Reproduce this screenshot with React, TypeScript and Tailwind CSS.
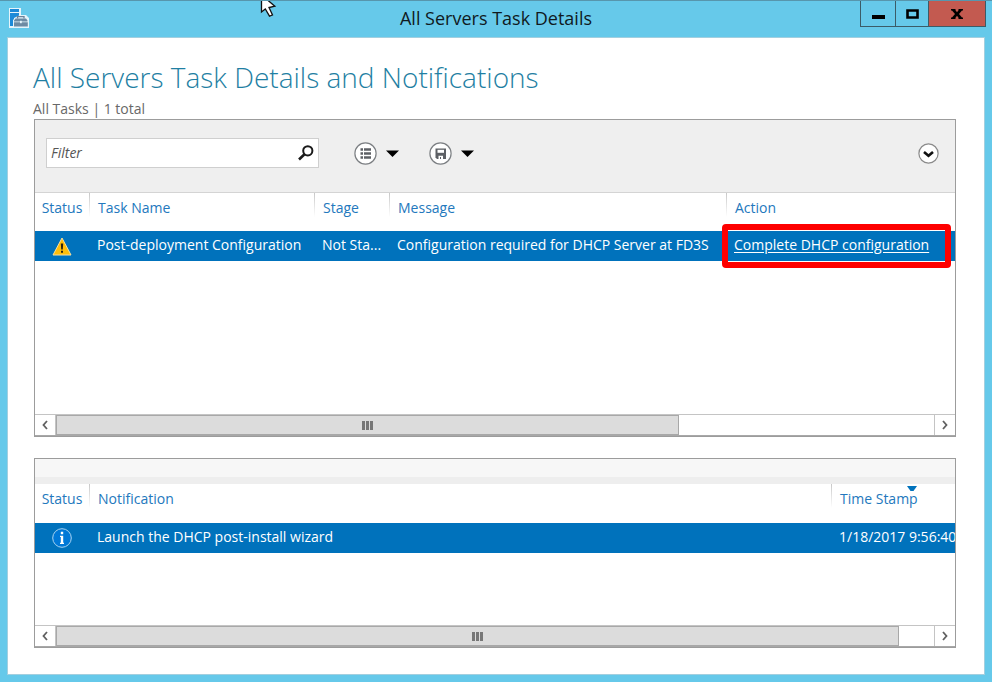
import type { ReactNode } from "react";

function ServerManagerIcon() {
  return (
    <svg width="20" height="20" viewBox="0 0 20 20" aria-hidden="true">
      <path d="M0 0h12v7h5l3 3v10H0z" fill="#e4f4fb" />
      <rect x="1" y="1" width="9" height="3" fill="#1c8ad8" />
      <path d="M1 5h9v2.500L5 10v1.500H4V18H1z" fill="#1c8ad8" />
      <path d="M8.500 10.500V8.600h6.500v1.900" fill="none" stroke="#6c8299" strokeWidth="1.300" />
      <path d="M6.500 10.500h10.500l1.500 2v1H11v-.8h1.500v.8H5v-1zM5 14.300h13.800V18.500H5z" fill="#6c8aa3" />
      <rect x="11" y="12.800" width="1.800" height="2.400" fill="#e4f4fb" />
    </svg>
  );
}

function Pointer() {
  return (
    <svg className="absolute top-0 left-[260px]" width="17" height="17" viewBox="0 0 17 17" aria-hidden="true">
      <path d="M1.500 -4V11L5.300 8L9.500 15.200L12.500 14L9 6.500L14.800 5.200L4 -4z" fill="#fff" stroke="#111" strokeWidth="1.300" />
    </svg>
  );
}

function SearchIcon() {
  return (
    <svg width="16" height="16" viewBox="0 0 16 16" aria-hidden="true">
      <circle cx="9.800" cy="5.800" r="4.600" fill="none" stroke="#1a1a1a" strokeWidth="2" />
      <path d="M6.500 9.200L1 14.500" stroke="#1a1a1a" strokeWidth="2.600" />
    </svg>
  );
}

function ListIcon() {
  return (
    <svg width="23" height="23" viewBox="0 0 23 23" aria-hidden="true">
      <circle cx="11.500" cy="11.500" r="10.600" fill="#fff" stroke="#7d8084" strokeWidth="1.200" />
      <path d="M6.500 7.500h2.500M6.500 11.500h2.500M6.500 15.500h2.500M10 7.500h7M10 11.500h7M10 15.500h7" stroke="#5d6065" strokeWidth="2.400" />
    </svg>
  );
}

function SaveIcon() {
  return (
    <svg width="23" height="23" viewBox="0 0 23 23" aria-hidden="true">
      <circle cx="11.500" cy="11.500" r="10.600" fill="#fff" stroke="#7d8084" strokeWidth="1.200" />
      <path d="M6.500 6.500h10.500v10.500h-9l-1.500-1.500z" fill="#5d6065" />
      <path d="M8.500 7.800h6.500v3H8.500z" fill="#fff" />
      <path d="M9.500 13.800h4.500V17H12v-2h-1v2H9.500z" fill="#fff" />
    </svg>
  );
}

function Caret() {
  return (
    <svg width="13" height="7" viewBox="0 0 13 7" aria-hidden="true">
      <path d="M0 .5h13L6.500 7z" fill="#000" />
    </svg>
  );
}

function ExpandIcon() {
  return (
    <svg width="21" height="21" viewBox="0 0 21 21" aria-hidden="true">
      <circle cx="10.500" cy="10.500" r="9.600" fill="#fff" stroke="#8a8a8a" strokeWidth="1.200" />
      <path d="M6 9l4.500 3.800L15 9" fill="none" stroke="#111" strokeWidth="2.600" />
    </svg>
  );
}

function WarningIcon() {
  return (
    <svg className="mx-auto" width="20" height="19" viewBox="0 0 20 19" role="img" aria-label="Warning">
      <path d="M10 1L19 18H1z" fill="#ffbe0a" stroke="#f6dfa0" strokeWidth="1" strokeLinejoin="round" />
      <path d="M8.800 6.500h2.400l-.4 6H9.200zM9 13.800h2v2H9z" fill="#2b2411" />
    </svg>
  );
}

function InfoIcon() {
  return (
    <svg className="mx-auto" width="20" height="20" viewBox="0 0 20 20" role="img" aria-label="Information">
      <circle cx="10" cy="10" r="9.300" fill="#0078d7" stroke="#a8d3f0" strokeWidth="1" />
      <path d="M8.800 3.800h2.400v2.400H8.800zM8 7.800h3.200v7H12v1.200H8v-1.200h.8V9H8z" fill="#fff" />
    </svg>
  );
}

function Header({ children, first = false }: { children: ReactNode; first?: boolean }) {
  return (
    <th scope="col" className={`relative p-0 align-top font-normal whitespace-nowrap ${first ? "text-center" : "pl-[9px] text-left"}`}>
      {!first && <span className="absolute top-0 left-0 h-6 w-px bg-linear-to-b from-[#c8c8c8] to-white" />}
      <div className="pt-[3px] leading-6">{children}</div>
    </th>
  );
}

function Scrollbar({ label, thumb, value }: { label: string; thumb: string; value: number }) {
  return (
    <div role="scrollbar" aria-label={label} aria-orientation="horizontal" aria-valuenow={value} aria-controls="lists" className="flex h-[22px] border-t border-b border-t-[#c4c4c4] border-b-[#a8a8a8] bg-white">
      <button aria-label="Scroll left" className="grid w-[21px] place-items-center border-r border-[#c4c4c4]">
        <svg width="6" height="10" viewBox="0 0 6 10"><path d="M5 1L1.500 5L5 9" fill="none" stroke="#606060" strokeWidth="1.800" /></svg>
      </button>
      <div className="flex-1">
        <div className={`flex h-full items-center justify-center gap-px border border-[#a8a8a8] bg-[#dcdcdc] ${thumb}`}>
          <span className="h-[9px] w-[3px] bg-[#777]" />
          <span className="h-[9px] w-[3px] bg-[#777]" />
          <span className="h-[9px] w-[3px] bg-[#777]" />
        </div>
      </div>
      <button aria-label="Scroll right" className="grid w-[21px] place-items-center border-l border-[#c4c4c4]">
        <svg width="6" height="10" viewBox="0 0 6 10"><path d="M1 1l3.500 4L1 9" fill="none" stroke="#606060" strokeWidth="1.800" /></svg>
      </button>
    </div>
  );
}

export default function App() {
  return (
    <div className="relative flex min-h-screen flex-col border-t border-[#5796ad] bg-[#66c9ea] px-[7px] pb-[7px] font-['Open_Sans','Noto_Sans',sans-serif] text-sm">
      <header className="grid h-9 grid-cols-[1fr_auto_1fr]">
        <div className="pt-[7px] pl-[2px]"><ServerManagerIcon /></div>
        <div className="pt-[5px] text-lg leading-6 text-[#101a1e]">All Servers Task Details</div>
        <div className="-mr-px flex h-[26px] justify-self-end border border-t-0 border-[#3b5c68]">
          <button aria-label="Minimize" className="grid w-[35px] place-items-center border-r border-[#3b5c68]">
            <svg width="13" height="12" viewBox="0 0 13 12"><path d="M0 7h13v4H0z" fill="#000" /></svg>
          </button>
          <button aria-label="Maximize" className="grid w-[33px] place-items-center border-r border-[#3b5c68]">
            <svg width="13" height="10" viewBox="0 0 13 10"><path d="M1.500 1.500h10v7h-10z" fill="none" stroke="#000" strokeWidth="2.600" /></svg>
          </button>
          <button aria-label="Close" className="grid w-14 place-items-center bg-[#c35a50]">
            <svg width="12" height="10" viewBox="0 0 12 10"><path d="M0 0h4.500v1.300L6 3.200l1.500-1.900V0H12v1.500h-1L8 5l3 3.500h1V10H7.500V8.700L6 6.800 4.500 8.700V10H0V8.500h1L4 5 1 1.500H0z" fill="#000" /></svg>
          </button>
        </div>
      </header>
      <Pointer />

      <main id="lists" className="flex flex-1 flex-col border border-[#a3cfdf] bg-white pt-[19px] pr-7 pb-[26px] pl-[26px]">
        <div className="-ml-px">
          <h1 className="text-[28px] leading-10 font-light text-[#1f7fa3]">All Servers Task Details and Notifications</h1>
          <p className="pt-[2px] leading-5 text-[#686868]">All Tasks | 1 total</p>
        </div>

        <section aria-label="Tasks" className="flex flex-1 flex-col border border-[#9c9c9c]">
          <div className="flex h-[73px] border-b border-[#d4d4d4] bg-[#efefef] pt-[18px] pr-4 pl-[11px]">
            <div className="flex h-[30px] w-[273px] items-center border border-[#cfcfcf] bg-white pr-1 pl-1">
              <input type="text" aria-label="Filter" placeholder="Filter" className="min-w-0 flex-1 outline-none placeholder:text-[#555] placeholder:italic" />
              <button aria-label="Search"><SearchIcon /></button>
            </div>
            <button aria-label="Saved queries" className="ml-[35px] flex h-[30px] items-center gap-[9px]"><ListIcon /><Caret /></button>
            <button aria-label="Save query" className="ml-[30px] flex h-[30px] items-center gap-[9px]"><SaveIcon /><Caret /></button>
            <button aria-label="Expand" className="ml-auto h-[30px]"><ExpandIcon /></button>
          </div>
          <div className="min-h-40 flex-1">
            <table className="w-full table-fixed border-collapse">
              <colgroup>
                <col className="w-[54px]" />
                <col className="w-[225px]" />
                <col className="w-[75px]" />
                <col className="w-[337px]" />
                <col />
              </colgroup>
              <thead>
                <tr className="h-[38px] text-[#2378bd]">
                  <Header first>Status</Header>
                  <Header>Task Name</Header>
                  <Header>Stage</Header>
                  <Header>Message</Header>
                  <Header>Action</Header>
                </tr>
              </thead>
              <tbody>
                <tr className="h-[30px] bg-[#0072bc] whitespace-nowrap text-white">
                  <td className="p-0"><WarningIcon /></td>
                  <td className="p-0 pb-[3px] pl-2">Post-deployment Configuration</td>
                  <td className="p-0 pb-[3px] pl-2">Not Sta...</td>
                  <td className="p-0 pb-[3px] pl-2">Configuration required for DHCP Server at FD3S</td>
                  <td className="relative p-0 pb-[3px] pl-2">
                    <a href="#complete" className="underline underline-offset-2">Complete DHCP configuration</a>
                    <span className="pointer-events-none absolute -inset-y-[7px] right-1 -left-1 rounded-sm border-6 border-[#fe0000]" />
                  </td>
                </tr>
              </tbody>
            </table>
          </div>
          <Scrollbar label="Tasks scroll" thumb="w-[71%]" value={0} />
        </section>

        <section aria-label="Notifications" className="mt-[21px] border border-[#9c9c9c]">
          <div className="h-[25px] border-b-[7px] border-[#eeeeee] bg-[#f7f7f7]" />
          <div className="min-h-[141px]">
            <table className="w-full table-fixed border-collapse">
              <colgroup>
                <col className="w-[54px]" />
                <col />
                <col className="w-[124px]" />
              </colgroup>
              <thead>
                <tr className="h-[39px] text-[#2378bd]">
                  <Header first>Status</Header>
                  <Header>Notification</Header>
                  <Header>
                    Time Stamp
                    <svg className="absolute top-[2px] left-[76px]" width="10" height="5" viewBox="0 0 10 5" aria-hidden="true"><path d="M0 0h10L6.500 5h-3z" fill="#0072bc" /></svg>
                  </Header>
                </tr>
              </thead>
              <tbody>
                <tr className="h-[30px] bg-[#0072bc] whitespace-nowrap text-white">
                  <td className="p-0"><InfoIcon /></td>
                  <td className="p-0 pb-[3px] pl-2">Launch the DHCP post-install wizard</td>
                  <td className="overflow-hidden p-0 pb-[3px] pl-2">1/18/2017 9:56:40</td>
                </tr>
              </tbody>
            </table>
          </div>
          <Scrollbar label="Notifications scroll" thumb="w-[96%]" value={0} />
        </section>
      </main>
    </div>
  );
}
